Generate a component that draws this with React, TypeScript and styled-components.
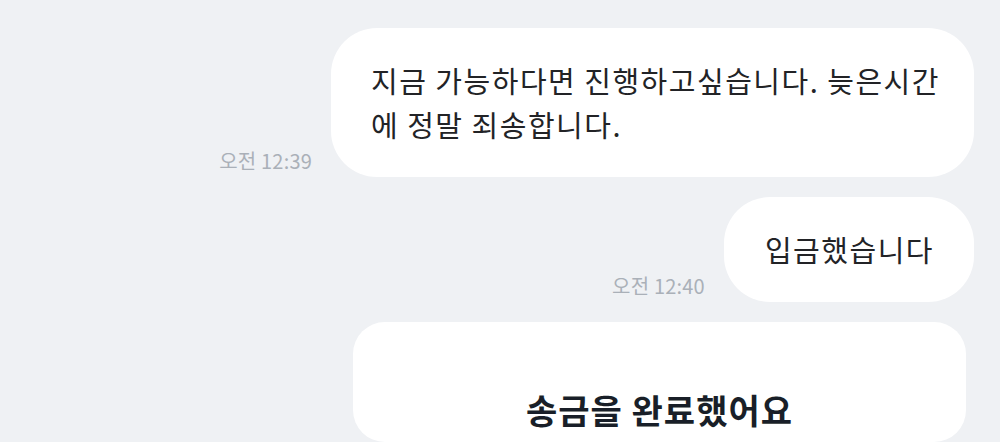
import React from "react";
import styled, { createGlobalStyle } from "styled-components";

const Global = createGlobalStyle`
  html, body { margin: 0; padding: 0; background: #eff1f4; }
  body { font-family: "Noto Sans CJK KR", "Noto Sans", sans-serif; }
  * { box-sizing: border-box; }
`;

const Page = styled.div`
  width: 1000px;
  height: 442px;
  overflow: hidden;
  background: #eff1f4;
  display: flex;
  flex-direction: column;
  align-items: flex-end;
  gap: 20px;
  padding: 28px 26px 0 0;
`;

const Row = styled.div`
  display: flex;
  align-items: flex-end;
  justify-content: flex-end;
  gap: 19px;
`;

const Time = styled.span`
  font-size: 20px;
  line-height: 26px;
  color: #aab0b8;
  white-space: nowrap;
  margin-bottom: 3px;
  letter-spacing: 0.2px;
`;

const Bubble = styled.div`
  background: #ffffff;
  border-radius: 46px;
  padding: 30px 40px 31px 41px;
  font-size: 29px;
  line-height: 44px;
  letter-spacing: 1.5px;
  color: #222326;
  white-space: nowrap;
`;

const WideBubble = styled(Bubble)`
  width: 643px;
  padding: 30px 30px 31px 40px;
  white-space: normal;
`;

const Card = styled.div`
  width: 613px;
  height: 200px;
  margin-right: 8px;
  background: #ffffff;
  border-radius: 32px;
  display: flex;
  flex-direction: column;
  align-items: center;
  padding-top: 64px;
`;

const Title = styled.h2`
  margin: 0;
  font-size: 34px;
  line-height: 48px;
  font-weight: 700;
  letter-spacing: 1px;
  color: #191f28;
`;

export default function App() {
  return (
    <>
      <Global />
      <Page>
        <Row>
          <Time>오전 12:39</Time>
          <WideBubble>지금 가능하다면 진행하고싶습니다. 늦은시간에 정말 죄송합니다.</WideBubble>
        </Row>
        <Row>
          <Time>오전 12:40</Time>
          <Bubble>입금했습니다</Bubble>
        </Row>
        <Card>
          <Title>송금을 완료했어요</Title>
        </Card>
      </Page>
    </>
  );
}
